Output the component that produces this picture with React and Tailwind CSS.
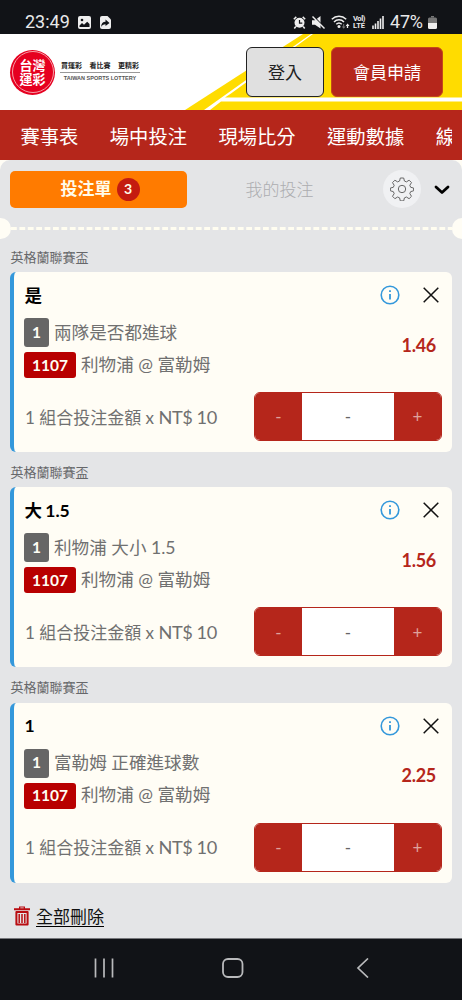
import React from 'react';

const NAV_ITEMS = ['賽事表', '場中投注', '現場比分', '運動數據'];

const BETS = [
  { id: 1, pick: '是', market: '兩隊是否都進球', odds: '1.46' },
  { id: 2, pick: '大 1.5', market: '利物浦 大小 1.5', odds: '1.56' },
  { id: 3, pick: '1', market: '富勒姆 正確進球數', odds: '2.25' },
];

function StatusBar() {
  return (
    <div className="flex h-[34px] shrink-0 items-center bg-[#111317] pt-[10px] pr-[25px] pl-[25px] font-['Roboto','Noto_Sans_CJK_TC',sans-serif] text-[#e9e9ea]">
      <span className="w-[46px] text-[18px] leading-6 whitespace-nowrap">23:49</span>
      <svg className="ml-[7px]" width="13" height="13" viewBox="0 0 13 13">
        <rect width="13" height="13" rx="2" fill="#eee" />
        <circle cx="4" cy="4" r="1.3" fill="#111317" />
        <path d="M1.5 11V9.500l2.500-2.500 2 1.800 3.200-3L11.500 8v3z" fill="#111317" />
      </svg>
      <svg className="ml-[9px]" width="11" height="13" viewBox="0 0 11 13">
        <path d="M2 0h5.500L11 3.500V11a2 2 0 0 1-2 2H2a2 2 0 0 1-2-2V2a2 2 0 0 1 2-2z" fill="#eee" />
        <path d="M1 11c.3-3.500 1.800-5.300 4.500-5.300V3.500L9.500 7l-4 3V8.300C3.500 8.300 2 9.300 1 11z" fill="#111317" />
      </svg>
      <svg className="ml-auto" width="13" height="13" viewBox="0 0 13 13">
        <circle cx="6.500" cy="6.800" r="5" fill="#eee" />
        <path d="M.8 3.200L3.300.9M12.200 3.200L9.700.9M2.800 10.500l-1.500 2M10.200 10.500l1.500 2" stroke="#eee" strokeWidth="1.500" />
        <path d="M6.500 4v3.200h2.800" fill="none" stroke="#111317" strokeWidth="1.200" />
      </svg>
      <svg className="ml-[6px]" width="13" height="13" viewBox="0 0 13 13">
        <path d="M0 4.300h3L8.500 0v12.500L3 8.700H0z" fill="#eee" />
        <path d="M0 -1l14 14" stroke="#111317" strokeWidth="1.500" />
        <path d="M.5.5l12 12" stroke="#eee" strokeWidth="1.400" />
      </svg>
      <svg className="ml-[6px]" width="19" height="14" viewBox="0 0 19 14">
        <g fill="none" stroke="#eee" strokeWidth="1.500">
          <path d="M.8 4.200a10.500 10.500 0 0 1 14.400 0" />
          <path d="M3 6.900a7 7 0 0 1 10 0" />
          <path d="M5.300 9.300a3.900 3.900 0 0 1 5.400 0" />
        </g>
        <circle cx="8" cy="11.600" r="1.500" fill="#eee" />
        <path d="M12.700 9v3" stroke="#777" />
        <path d="M10.800 11.500h3.800l-1.900 2.300z" fill="#777" />
        <path d="M16.500 13V10.500" stroke="#eee" strokeWidth="1.300" />
        <path d="M14.700 11l1.900-2.500 1.900 2.500z" fill="#eee" />
      </svg>
      <div className="ml-[3px] w-[15px] text-[7.500px] leading-[7px] font-bold">
        <div className="tracking-[-0.4px]">Vol)</div>
        <div>LTE</div>
      </div>
      <svg className="ml-[4px]" width="12" height="13" viewBox="0 0 12 13">
        <path d="M1 13V9.500M3.500 13V7.500M6 13V5M8.500 13V2.500M11 13V0" stroke="#eee" strokeWidth="1.600" />
      </svg>
      <span className="ml-[6px] w-[35px] text-[18px] leading-6 whitespace-nowrap tracking-[-0.2px]">47%</span>
      <svg className="ml-[3px] shrink-0" width="9" height="13" viewBox="0 0 9 13">
        <path d="M3 0h3v1.500H3z" fill="#777" />
        <path d="M0 7V3a1.500 1.500 0 0 1 1.500-1.500h6A1.500 1.500 0 0 1 9 3v4z" fill="#777" />
        <path d="M0 7h9v4.500A1.500 1.500 0 0 1 7.500 13h-6A1.500 1.500 0 0 1 0 11.500z" fill="#eee" />
      </svg>
    </div>
  );
}

function Logo() {
  return (
    <div className="flex items-center">
      <div className="flex h-[45px] w-[45px] items-center justify-center rounded-full bg-[#e60020]">
        <div className="flex h-[42px] w-[42px] flex-col items-center justify-center rounded-full border border-[#f6a0a8] text-[13px] leading-[14px] font-bold text-white">
          <span>台灣</span>
          <span>運彩</span>
        </div>
      </div>
      <div className="mt-[-2px] ml-[5px] w-[80px]">
        <div className="flex justify-between border-b border-[#999] px-px pb-[3px] text-[7px] leading-[8px] font-bold text-[#222]">
          <span>買運彩</span>
          <span>看比賽</span>
          <span>更精彩</span>
        </div>
        <div className="mt-px text-center font-['Liberation_Sans',sans-serif] text-[5.500px] leading-[8px] font-bold whitespace-nowrap text-[#555]">
          TAIWAN SPORTS LOTTERY
        </div>
      </div>
    </div>
  );
}

function Header() {
  return (
    <header className="relative h-[76px] shrink-0 bg-white">
      <svg className="absolute inset-0" width="462" height="76" viewBox="0 0 462 76">
        <path d="M185 76L303 0H462V76z" fill="#ffdc00" />
        <path d="M204 76L311 0L313 0L231 59.500L225 63.500H462V67.500H221L210 76z" fill="#fff" />
      </svg>
      <div className="relative flex h-full items-center pr-[19px] pl-[10px]">
        <Logo />
        <button className="ml-auto h-[50px] w-[78px] rounded-[6px] border border-[#222] bg-[#e0e0e0] pt-px text-[17px] text-[#222]">
          登入
        </button>
        <button className="ml-[7px] h-[50px] w-[112px] rounded-[6px] border border-[#c44a18] bg-[#b5261b] pt-px text-[17px] text-white">
          會員申請
        </button>
      </div>
    </header>
  );
}

function Nav() {
  return (
    <nav className="flex h-[50px] shrink-0 items-center gap-[31.500px] bg-[#b5261b] pt-[5px] pl-[20.500px] text-[19.300px] whitespace-nowrap text-white">
      {NAV_ITEMS.map((item) => (
        <span key={item}>{item}</span>
      ))}
      <span className="w-[16px] overflow-hidden">線</span>
    </nav>
  );
}

function GearIcon() {
  return (
    <svg width="24" height="24" viewBox="0 0 24 24" fill="none" stroke="#666" strokeWidth="1">
      <circle cx="12" cy="12" r="3.700" />
      <path
        strokeLinejoin="round"
        d="M10.300 1h3.400l.7 3 2 .9 2.700-1.700 2.400 2.400-1.700 2.700.9 2 2.900.7v2.800l-2.900.8-.9 2 1.700 2.700-2.400 2.400-2.700-1.700-2 .9-.7 3h-3.400l-.7-3-2-.9-2.700 1.700-2.400-2.400 1.700-2.700-.9-2-2.900-.8V11l2.900-.7.9-2-1.700-2.700 2.400-2.400 2.700 1.700 2-.9z"
      />
    </svg>
  );
}

function SlipTabs() {
  return (
    <div className="flex h-[58px] items-center pr-[12px] pl-[10px]">
      <button className="flex h-[37px] w-[177px] items-center justify-center gap-[5px] rounded-[5px] bg-[#ff7b00] pl-[3px] text-[17px] font-bold text-[#fffbea]">
        投注單
        <span className="flex h-[23px] w-[23px] items-center justify-center rounded-full bg-[#c41b10] text-[14px] leading-none">3</span>
      </button>
      <span className="w-[185px] pt-[2px] text-center text-[17px] font-light text-[#acadb0]">我的投注</span>
      <span className="ml-[11px] flex h-[38px] w-[38px] items-center justify-center rounded-full bg-[#f0f1f3]">
        <GearIcon />
      </span>
      <svg className="mt-[2px] ml-auto" width="16" height="10" viewBox="0 0 16 10">
        <path d="M2 2l6 5.500L14 2" fill="none" stroke="#000" strokeWidth="2.800" strokeLinecap="round" strokeLinejoin="round" />
      </svg>
    </div>
  );
}

function TicketDivider() {
  return (
    <div className="flex h-[21px] items-center justify-between overflow-hidden">
      <span className="h-[21px] w-[10.500px] shrink-0 rounded-r-full bg-[#fffdf5]" />
      <svg width="441" height="3" viewBox="0 0 441 3">
        <path d="M0 1.500H441" stroke="#fffdf0" strokeWidth="3" strokeDasharray="5.800 2.600" />
      </svg>
      <span className="h-[21px] w-[10.500px] shrink-0 rounded-l-full bg-[#fffdf5]" />
    </div>
  );
}

function Stepper() {
  return (
    <div className="flex h-[49px] w-[188px] overflow-hidden rounded-[6px] border border-[#b5261b] bg-white font-['Lato',sans-serif] text-[17px]">
      <button className="w-[47px] bg-[#b5261b] pt-px text-[#dfa29b]">-</button>
      <span className="flex flex-1 items-center justify-center pt-px text-[#666]">-</span>
      <button className="w-[47px] bg-[#b5261b] pt-px text-[#dfa29b]">+</button>
    </div>
  );
}

function BetCard({ bet }) {
  return (
    <section className="mb-[8px] px-[10px]">
      <div className="h-[27.200px] pt-[2px] pl-[0.500px] text-[13px] leading-[20px] text-[#66676a]">英格蘭聯賽盃</div>
      <div className="h-[180px] rounded-[6px] border-l-4 border-[#3498db] bg-[#fffdf5] pr-[10px] pl-[10px]">
        <div className="flex h-[46px] items-center">
          <h3 className="pt-[2px] pl-[0.500px] text-[17.500px] font-bold whitespace-nowrap text-black [word-spacing:-1px]">{bet.pick}</h3>
          <svg className="ml-auto" width="20" height="20" viewBox="0 0 20 20">
            <circle cx="10" cy="10" r="8.800" fill="none" stroke="#3498db" strokeWidth="1.600" />
            <path d="M10 9v5.500M10 5.300v1.800" stroke="#3498db" strokeWidth="1.800" />
          </svg>
          <svg className="mr-[3px] ml-[23px]" width="16" height="16" viewBox="0 0 16 16">
            <path d="M.7.7l14.600 14.600M15.300.7L.7 15.300" stroke="#111" strokeWidth="1.500" />
          </svg>
        </div>
        <div className="flex items-center justify-between pr-[6px]">
          <div className="text-[17.600px] whitespace-nowrap text-[#707070]">
            <div className="flex h-[29px] items-center">
              <span className="mr-[5px] flex h-[29px] w-[25px] items-center justify-center rounded-[3px] bg-[#666] text-[15.500px] font-bold text-[#fffdf5]">1</span>
              <span className="pt-px">{bet.market}</span>
            </div>
            <div className="mt-[5px] flex h-[26px] items-center">
              <span className="mr-[5px] flex h-[26px] w-[52px] items-center justify-center rounded-[3px] bg-[#b80000] text-[15.500px] font-bold text-[#fffdf5]">1107</span>
              <span>利物浦 @ 富勒姆</span>
            </div>
          </div>
          <span className="mb-[6px] text-[18px] font-bold tracking-[-0.3px] text-[#b5261b]">{bet.odds}</span>
        </div>
        <div className="mt-[14px] flex items-center justify-between">
          <span className="pt-[2px] pl-px text-[17px] whitespace-nowrap text-[#707070]">
            1 組合投注金額 x <span className="text-[18.200px] tracking-[-0.4px]">NT$ 10</span>
          </span>
          <Stepper />
        </div>
      </div>
    </section>
  );
}

function DeleteAll() {
  return (
    <div className="mt-[23px] flex items-center pl-[14px]">
      <svg width="16" height="20" viewBox="0 0 16 20">
        <path d="M0 2.200h5V.5h6v1.700h5v2H0zM6.300 1.600v.6h3.400v-.6z" fill="#b90d12" fillRule="evenodd" />
        <path d="M2.400 6h11.200v12.600H2.400z" fill="none" stroke="#b90d12" strokeWidth="2" strokeLinejoin="round" />
        <path d="M5.200 8v9M8 8v9M10.800 8v9" stroke="#b90d12" strokeWidth="1.500" />
      </svg>
      <a className="mt-[2px] ml-[6px] border-b border-black text-[17px] leading-[18px] text-[#111]">全部刪除</a>
    </div>
  );
}

function SystemNav() {
  return (
    <div className="mt-auto flex h-[62px] shrink-0 items-center border-t border-[#77787c] bg-[#111317] pb-[3px] pl-[94px]">
      <svg width="20" height="20" viewBox="0 0 20 20">
        <path d="M1.500.5v19M10 .5v19M18.500.5v19" stroke="#b9babc" strokeWidth="1.700" />
      </svg>
      <svg className="ml-[108px]" width="22" height="20" viewBox="0 0 22 20">
        <rect x="1" y="1" width="19.500" height="18" rx="5" fill="none" stroke="#b9babc" strokeWidth="1.800" />
      </svg>
      <svg className="ml-[112px]" width="14" height="20" viewBox="0 0 14 20">
        <path d="M12 .5L2 10l10 9.500" fill="none" stroke="#b9babc" strokeWidth="1.700" />
      </svg>
    </div>
  );
}

function App() {
  return (
    <div className="flex h-[1000px] w-[462px] flex-col overflow-hidden bg-[#fffdf5] font-['Lato','Noto_Sans_CJK_TC',sans-serif]">
      <StatusBar />
      <Header />
      <Nav />
      <main className="h-[778px] shrink-0 rounded-t-[10px] bg-[#e4e5e7]">
        <SlipTabs />
        <TicketDivider />
        <div className="pt-[6px]">
          {BETS.map((bet) => (
            <BetCard key={bet.id} bet={bet} />
          ))}
        </div>
        <DeleteAll />
      </main>
      <SystemNav />
    </div>
  );
}

export default App;
